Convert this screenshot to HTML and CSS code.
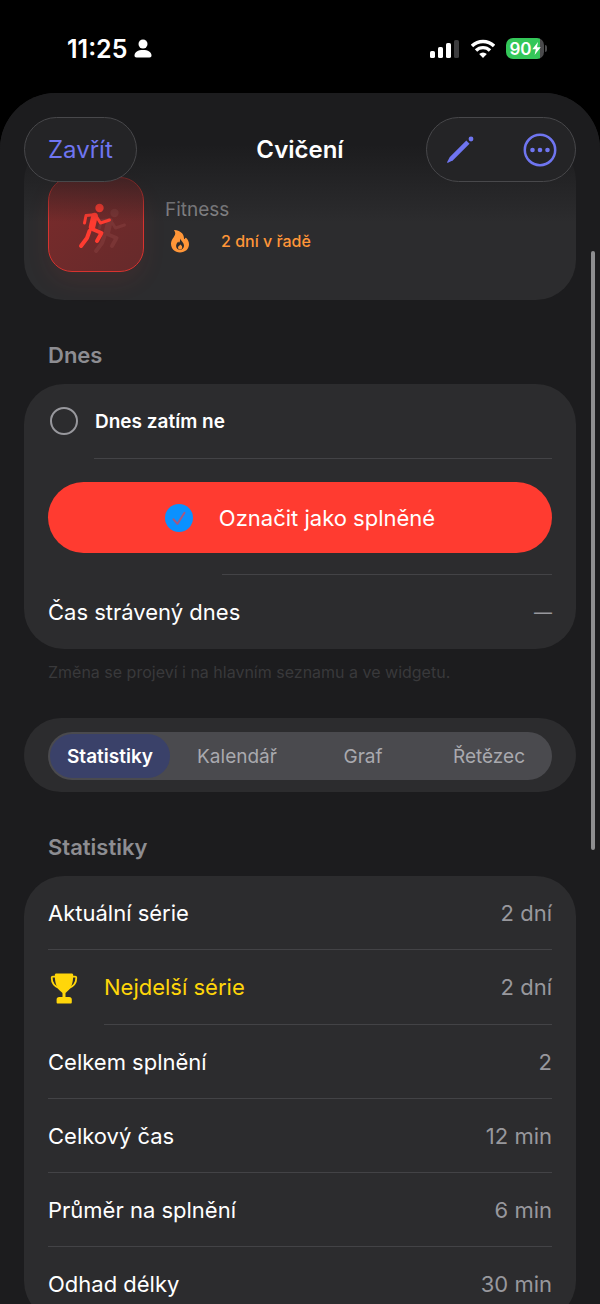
FILE: index.html
```html
<!DOCTYPE html>
<html lang="cs">
<head>
    <meta charset="UTF-8">
    <meta name="viewport" content="width=device-width, initial-scale=1.0">
    <title>Cvičení</title>
    <link rel="stylesheet" href="styles.css">
</head>
<body>
    <div class="status-bar">
        <div class="status-left">
            <span class="time">11:25</span>
            <svg width="18" height="20" viewBox="0 0 18 20" fill="#fff">
                <circle cx="9" cy="5" r="4.500"/>
                <path d="M0.500 16.500C0.500 13 4 11 9 11s8.500 2 8.500 5.500c0 1.200-.7 2-2 2h-13c-1.300 0-2-.8-2-2z"/>
            </svg>
        </div>
        <div class="status-right">
            <svg width="30" height="20" viewBox="0 0 30 20">
                <rect x="0" y="12" width="5" height="7" rx="1.600" fill="#fff"/>
                <rect x="8" y="8" width="5" height="11" rx="1.600" fill="#fff"/>
                <rect x="16" y="4" width="5" height="15" rx="1.600" fill="#fff"/>
                <rect x="24" y="1" width="5" height="18" rx="1.600" fill="#3c3c3e"/>
            </svg>
            <svg width="24" height="20" viewBox="1 0 24 20" fill="none" stroke="#fff" stroke-width="3.400">
                <path d="M2 7a15.800 15.800 0 0 1 22 0"/>
                <path d="M6 11.500a10 10 0 0 1 14 0"/>
                <path d="M9.200 14.900a5.500 5.500 0 0 1 7.600 0L13 19z" fill="#fff" stroke="none"/>
            </svg>
            <div class="battery">
                <span>90</span>
                <svg width="9" height="13" viewBox="0 0 9 13" fill="#fff"><path d="M6 0L0.300 7.300h3.500L2.600 13 8.700 5.300H5z"/></svg>
            </div>
        </div>
    </div>

    <main class="sheet">
        <header class="nav">
            <button class="pill close">Zavřít</button>
            <h1>Cvičení</h1>
            <div class="pill actions">
                <button aria-label="Upravit">
                    <svg width="30" height="30" viewBox="0 0 30 30" fill="#6f75f0">
                        <path d="M21.300 5.600l3.200 3.200L8 25.200 3 27.700c-.7.300-1.100-.1-.8-.8L4.800 22z"/>
                        <circle cx="26" cy="4" r="2.400"/>
                    </svg>
                </button>
                <button aria-label="Další">
                    <svg width="34" height="34" viewBox="0 0 34 34" fill="#6f75f0">
                        <circle cx="17" cy="17" r="15.200" fill="none" stroke="#6f75f0" stroke-width="2.500"/>
                        <circle cx="9.500" cy="17" r="2.300"/>
                        <circle cx="17" cy="17" r="2.300"/>
                        <circle cx="24.500" cy="17" r="2.300"/>
                    </svg>
                </button>
            </div>
        </header>

        <section class="card hero">
            <div class="hero-icon">
                <svg width="72" height="72" viewBox="0 0 72 72">
                    <defs>
                        <g id="runner">
                            <circle cx="22.500" cy="5" r="4.200" stroke="none"/>
                            <path d="M17.500 13L15 24" stroke-width="6.500"/>
                            <path d="M17 11.800L9 12.500 7.500 20" stroke-width="3" fill="none"/>
                            <path d="M19 13l4.500 7 9-3" stroke-width="3" fill="none"/>
                            <path d="M15 26l9.500 4-4.500 8" stroke-width="4" fill="none"/>
                            <path d="M12.500 28L10 35 4 43" stroke-width="4" fill="none"/>
                        </g>
                    </defs>
                    <use href="#runner" x="32" y="19" class="runner-shadow"/>
                    <use href="#runner" x="17" y="14" class="runner"/>
                </svg>
            </div>
            <div class="hero-text">
                <p class="category">Fitness</p>
                <p class="streak">
                    <svg width="20" height="24" viewBox="0 0 20 24">
                        <path d="M4.500 1c5 .3 9.500 3.300 9.500 8.500 0 .8.700.8 1-.1.400-.9.900-.9 1.500-.1 1.500 1.800 2.500 3.700 2.500 6 0 4.800-3.800 8.200-9 8.200S1 20 1 14.800C1 9.500 6.500 7 5 3 4.500 2 3.600 1 4.500 1z" fill="#ff9638"/>
                        <path d="M10.500 9.500c.2 2.500 3.500 4 3.500 7.300 0 2.400-1.600 3.900-3.900 3.900s-4-1.500-4-3.800c0-1.900 1-3.500 2-4 .6-.3.700.4.700 1 1.500-.8 1-2.700 1.700-4.400z" fill="#2c2c2e"/>
                        <path d="M10.300 15.500c1.300 1 1.900 1.700 1.900 2.900 0 1.300-.9 2-2.100 2s-2.100-.8-2.100-2 1.300-1.300 2.300-2.900z" fill="#ff9638"/>
                    </svg>
                    <span>2 dní v řadě</span>
                </p>
            </div>
        </section>

        <h2>Dnes</h2>
        <section class="card today">
            <label class="today-status">
                <input type="checkbox">
                <span>Dnes zatím ne</span>
            </label>
            <div class="today-action">
                <button class="done-button">
                    <svg width="28" height="28" viewBox="0 0 28 28">
                        <circle cx="14" cy="14" r="14" fill="#0a91ff"/>
                        <path d="M8.500 15.300l4 4.500 7-11" fill="none" stroke="#a9577f" stroke-width="2" stroke-linecap="round" stroke-linejoin="round"/>
                    </svg>
                    <span>Označit jako splněné</span>
                </button>
            </div>
            <div class="row">
                <span>Čas strávený dnes</span>
                <span class="value empty">—</span>
            </div>
        </section>
        <p class="note">Změna se projeví i na hlavním seznamu a ve widgetu.</p>

        <section class="card tabs-card">
            <div class="tabs" role="tablist">
                <button class="tab active" role="tab" aria-selected="true">Statistiky</button>
                <button class="tab" role="tab">Kalendář</button>
                <button class="tab" role="tab">Graf</button>
                <button class="tab" role="tab">Řetězec</button>
            </div>
        </section>

        <h2>Statistiky</h2>
        <section class="card stats">
            <div class="row"><span>Aktuální série</span><span class="value">2 dní</span></div>
            <div class="row best">
                <svg width="32" height="34" viewBox="0 0 32 34" fill="#ffd60a">
                    <path d="M8.500 2.500h15c1.200 0 1.700.5 1.700 1.600 0 9.400-2.600 14.200-6.600 16.800-.9.600-1.100 1-1.100 1.800v3.300h3.700c1.700 0 2.600 1 2.600 2.600v2.600c0 .8-.4 1.300-1.200 1.300H9.800c-.8 0-1.200-.5-1.200-1.300v-2.600c0-1.600.9-2.600 2.600-2.600h3.300v-3.300c0-.8-.2-1.200-1.100-1.800-4-2.600-6.600-7.400-6.600-16.800 0-1.100.5-1.600 1.700-1.600z"/>
                    <path d="M8 5.700H4.800c-.7 0-1.100.4-1.100 1.100 0 4.700 3 8.800 7.800 10.600M24 5.700h3.200c.7 0 1.100.4 1.100 1.100 0 4.700-3 8.800-7.800 10.600" fill="none" stroke="#ffd60a" stroke-width="1.800"/>
                </svg>
                <div class="best-line"><span>Nejdelší série</span><span class="value">2 dní</span></div>
            </div>
            <div class="row"><span>Celkem splnění</span><span class="value">2</span></div>
            <div class="row"><span>Celkový čas</span><span class="value">12 min</span></div>
            <div class="row"><span>Průměr na splnění</span><span class="value">6 min</span></div>
            <div class="row"><span>Odhad délky</span><span class="value">30 min</span></div>
        </section>
        <div class="scrollbar"></div>
    </main>
</body>
</html>
```
FILE: styles.css
```css
* {
    box-sizing: border-box;
    margin: 0;
    padding: 0;
}
body {
    display: flex;
    flex-direction: column;
    height: 100vh;
    overflow: hidden;
    background: #000;
    color: #fff;
    font-family: Inter, "Liberation Sans", sans-serif;
    font-size: 22px;
}
svg {
    display: block;
    flex: none;
}
button {
    border: none;
    background: none;
    color: inherit;
    font: inherit;
    cursor: pointer;
}

/* status bar */
.status-bar {
    display: flex;
    justify-content: space-between;
    align-items: center;
    flex: none;
    height: 93px;
    padding: 4px 56px 0 67px;
}
.status-left {
    display: flex;
    align-items: center;
    gap: 7px;
}
.time {
    font-size: 25px;
    font-weight: 600;
}
.status-right {
    display: flex;
    align-items: center;
    gap: 11px;
}
.battery {
    position: relative;
    display: flex;
    align-items: center;
    justify-content: center;
    width: 38px;
    height: 21px;
    border-radius: 7px;
    background: linear-gradient(to right, #34c759 34px, #4a4a4c 34px);
    font-size: 17px;
    font-weight: 600;
}
.battery::after {
    content: "";
    position: absolute;
    right: -3px;
    top: 7px;
    width: 2px;
    height: 7px;
    border-radius: 0 2px 2px 0;
    background: #4a4a4c;
}

/* sheet */
.sheet {
    position: relative;
    flex: 1;
    min-height: 0;
    overflow: hidden;
    padding: 48px 24px 0;
    border-radius: 56px 56px 0 0;
    background: #1c1c1e;
}
.nav {
    position: absolute;
    z-index: 1;
    top: 0;
    left: 0;
    right: 0;
    display: grid;
    grid-template-columns: 1fr auto 1fr;
    align-items: center;
    padding: 24px 24px 0;
}
.nav::before {
    content: "";
    position: absolute;
    z-index: -1;
    inset: 0 0 -40px;
    background: linear-gradient(#1c1c1e 40%, rgba(28, 28, 30, 0));
}
.nav h1 {
    font-size: 24px;
    font-weight: 600;
}
.pill {
    height: 65px;
    border: 1px solid #48484b;
    border-radius: 33px;
    background: #242426;
}
.close {
    justify-self: start;
    padding: 0 23px;
    color: #6f75f0;
    font-size: 24px;
}
.actions {
    display: flex;
    justify-content: space-between;
    align-items: center;
    justify-self: end;
    width: 150px;
    padding: 0 18px;
}

.card {
    border-radius: 40px;
    background: #2c2c2e;
}
.hero {
    display: flex;
    gap: 21px;
    height: 159px;
    padding: 36px 24px 28px;
}
.hero-icon {
    display: flex;
    align-items: center;
    justify-content: center;
    width: 96px;
    height: 95px;
    border: 1px solid #d8332f;
    border-radius: 24px;
    background: linear-gradient(135deg, #7a2b2b, #662a2b);
    box-shadow: 0 10px 24px rgba(255, 59, 48, 0.08);
}
.runner {
    fill: #ff3b30;
    stroke: #ff3b30;
    stroke-linecap: round;
    stroke-linejoin: round;
}
.runner-shadow {
    fill: #7a3535;
    stroke: #7a3535;
    stroke-linecap: round;
    stroke-linejoin: round;
}
.hero-text {
    padding-top: 20px;
}
.category {
    color: #8a8a8d;
    font-size: 19px;
    line-height: 26px;
}
.streak {
    display: flex;
    align-items: center;
    gap: 31px;
    padding: 6px 0 0 5px;
    color: #ff9638;
    font-size: 16px;
    font-weight: 500;
}

h2 {
    padding: 41px 24px 14px;
    color: #8d8d92;
    font-size: 22px;
    font-weight: 600;
    line-height: 29px;
}
.today-status {
    display: flex;
    align-items: center;
    gap: 17px;
    height: 74px;
    padding: 0 26px;
    font-size: 19px;
    font-weight: 600;
}
.today-status input {
    appearance: none;
    width: 28px;
    height: 28px;
    border: 2px solid #98989d;
    border-radius: 50%;
}
.today-action {
    padding: 24px 24px 22px;
    background:
        linear-gradient(#434346, #434346) right 24px top 0 / calc(100% - 94px) 1px no-repeat,
        linear-gradient(#434346, #434346) right 24px bottom 0 / calc(100% - 222px) 1px no-repeat;
}
.done-button {
    display: flex;
    align-items: center;
    justify-content: center;
    gap: 26px;
    width: 100%;
    height: 71px;
    border-radius: 36px;
    background: #ff3b30;
}
.row {
    display: flex;
    align-items: center;
    justify-content: space-between;
    height: 74px;
    margin: 0 24px;
}
.value {
    color: #98989d;
}
.empty {
    font-size: 18px;
}
.note {
    padding: 13px 24px 0;
    color: #39393b;
    font-size: 16px;
    line-height: 20px;
}

/* segmented control */
.tabs-card {
    margin-top: 36px;
    padding: 14px 24px 12px;
}
.tabs {
    display: grid;
    grid-template-columns: repeat(4, 1fr);
    height: 48px;
    border-radius: 24px;
    background: #4a4a4e;
}
.tab {
    border-radius: 22px;
    color: #a9a9ae;
    font-size: 19px;
}
.tab.active {
    margin: 2px 4px 2px 2px;
    background: #3a4169;
    color: #fff;
    font-weight: 600;
}

/* statistics */
.stats .row {
    border-bottom: 1px solid #434346;
}
.stats .best {
    gap: 24px;
    height: 75px;
    border-bottom: none;
    color: #ffd60a;
}
.best-line {
    display: flex;
    flex: 1;
    align-items: center;
    justify-content: space-between;
    height: 100%;
    border-bottom: 1px solid #434346;
}
.scrollbar {
    position: absolute;
    top: 158px;
    right: 5px;
    width: 4px;
    height: 599px;
    border-radius: 2px;
    background: #8e8e90;
}
```
